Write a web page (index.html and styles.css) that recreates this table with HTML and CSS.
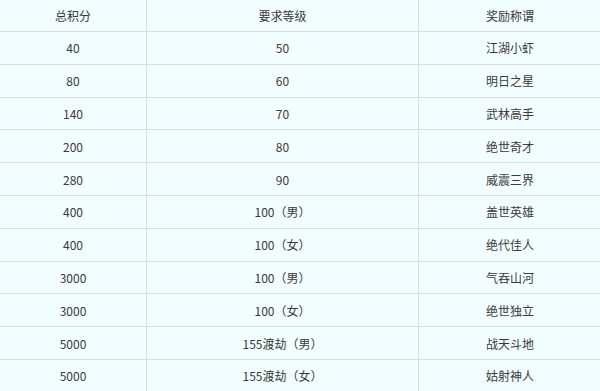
FILE: index.html
```html
<!DOCTYPE html>
<html lang="zh-CN">
<head>
    <meta charset="UTF-8">
    <title>积分称谓</title>
    <link rel="stylesheet" href="styles.css">
</head>
<body>
    <table class="rank">
        <tr class="head">
            <td class="c1">总积分</td>
            <td class="c2">要求等级</td>
            <td class="c3">奖励称谓</td>
        </tr>
        <tr><td>40</td><td>50</td><td>江湖小虾</td></tr>
        <tr><td>80</td><td>60</td><td>明日之星</td></tr>
        <tr><td>140</td><td>70</td><td>武林高手</td></tr>
        <tr><td>200</td><td>80</td><td>绝世奇才</td></tr>
        <tr><td>280</td><td>90</td><td>威震三界</td></tr>
        <tr><td>400</td><td>100（男）</td><td>盖世英雄</td></tr>
        <tr><td>400</td><td>100（女）</td><td>绝代佳人</td></tr>
        <tr><td>3000</td><td>100（男）</td><td>气吞山河</td></tr>
        <tr><td>3000</td><td>100（女）</td><td>绝世独立</td></tr>
        <tr><td>5000</td><td>155渡劫（男）</td><td>战天斗地</td></tr>
        <tr><td>5000</td><td>155渡劫（女）</td><td>姑射神人</td></tr>
    </table>
</body>
</html>
```

FILE: styles.css
```css
body{
    margin:0;
    background:#f2fdff;
    overflow:hidden;
}
.rank{
    width:602px;
    border-collapse:collapse;
    table-layout:fixed;
    font-family:"Noto Sans CJK SC","Microsoft YaHei",sans-serif;
    font-size:12px;
    color:#3a3a3a;
    background:#f2fdff;
}
.rank td{
    border:1px solid #dcdcdc;
    text-align:center;
    height:31.8px;
    padding:0;
}
.rank .head td{
    height:31px;
    border-top:none;
}
.rank .c1{
    width:146px;
}
.rank .c2{
    width:271px;
}
.rank td:first-child{
    border-left:none;
}
```
